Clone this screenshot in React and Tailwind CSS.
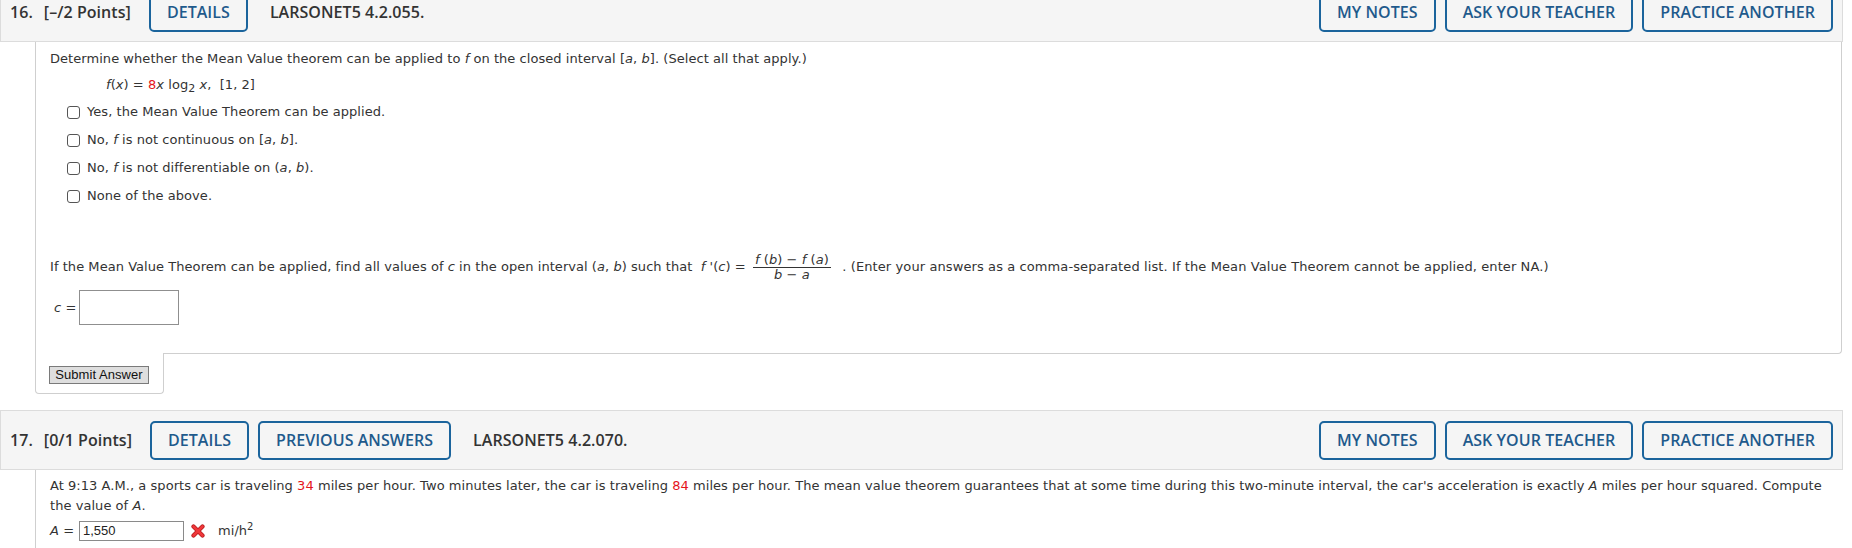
import React from 'react';

const btn =
  "h-[39px] px-4 flex items-center border-2 border-[#1b649c] rounded-[5px] text-[#1f5a8c] text-[16px] font-semibold whitespace-nowrap bg-[#f5f5f5]";

const QHeader = ({ num, points, left, code }) => (
  <div className="flex items-center h-[60px] w-[1843px] border border-[#dcdcdc] bg-[#f5f5f5] pl-[9px] pr-[9px] font-['Open_Sans',sans-serif] text-[#333]">
    <span className="text-[16px] font-semibold">{num}</span>
    <span className="ml-[11px] text-[16px] font-semibold">{points}</span>
    <div className="ml-[18px] flex gap-[9px]">
      {left.map((l) => (
        <div key={l} className={btn}>{l}</div>
      ))}
    </div>
    <span className="ml-[22px] text-[16px] font-semibold">{code}</span>
    {/* right side actions */}
    <div className="ml-auto flex gap-[9px]">
      <div className={btn}>MY NOTES</div>
      <div className={btn}>ASK YOUR TEACHER</div>
      <div className={btn}>PRACTICE ANOTHER</div>
    </div>
  </div>
);

const Box = () => (
  <span className="inline-block w-[13px] h-[13px] border border-[#555] rounded-[3px] bg-white mr-[7px]" />
);

const Option = ({ children }) => (
  <div className="flex items-center h-[20px] pl-[17px]">
    <Box />
    <span>{children}</span>
  </div>
);

const WrongIcon = () => (
  <svg width="14" height="14" viewBox="0 0 14 14" className="mx-[7px]">
    <path d="M2.5 2.5 L11.5 11.5 M11.5 2.5 L2.5 11.5" stroke="#b51a1a" strokeWidth="4.2" strokeLinecap="round" />
    <path d="M2.5 2.5 L11.5 11.5 M11.5 2.5 L2.5 11.5" stroke="#f0373a" strokeWidth="2.6" strokeLinecap="round" />
  </svg>
);

export default function App() {
  return (
    <div className="w-[1852px] h-[548px] overflow-hidden bg-white">
      <div className="mt-[-18px] font-['DejaVu_Sans',Verdana,sans-serif] text-[13px] tracking-[0.05px] text-[#333]">
        {/* Question 16 */}
        <QHeader num="16." points="[–/2 Points]" left={["DETAILS"]} code="LARSONET5 4.2.055." />
        <div className="ml-[35px] w-[1807px] border-l border-r border-b border-[#cfcfcf] rounded-br-[4px] pl-[14px] pt-[7px] pb-[28px]">
          <div className="h-[20px] leading-[20px] whitespace-nowrap">
            Determine whether the Mean Value theorem can be applied to <i>f</i> on the closed interval [<i>a</i>, <i>b</i>]. (Select all that apply.)
          </div>
          <div className="mt-[6px] h-[20px] leading-[20px] pl-[56px] whitespace-pre">
            <i>f</i>(<i>x</i>) = <span className="text-[#e5141b]">8</span><i>x</i> log<sub className="text-[11px]">2</sub> <i>x</i>,  [1, 2]
          </div>
          <div className="mt-[7px] flex flex-col gap-2">
            <Option>Yes, the Mean Value Theorem can be applied.</Option>
            <Option>No, <i>f</i> is not continuous on [<i>a</i>, <i>b</i>].</Option>
            <Option>No, <i>f</i> is not differentiable on (<i>a</i>, <i>b</i>).</Option>
            <Option>None of the above.</Option>
          </div>
          <div className="mt-[46px] h-[30px] flex items-center whitespace-pre">
            <span>If the Mean Value Theorem can be applied, find all values of <i>c</i> in the open interval (<i>a</i>, <i>b</i>) such that  <i>f</i> '(<i>c</i>) = </span>
            <span className="inline-flex flex-col items-center mx-[3px]">
              <span className="leading-[13px] border-b border-[#333] px-[2px] pb-px"><i>f</i> (<i>b</i>) − <i>f</i> (<i>a</i>)</span>
              <span className="leading-[13px]"><i>b</i> − <i>a</i></span>
            </span>
            <span className="tracking-[0.1px]">  . (Enter your answers as a comma-separated list. If the Mean Value Theorem cannot be applied, enter NA.)</span>
          </div>
          <div className="mt-[8px] flex items-center pl-[4px]">
            <span className="w-[25px]"><i>c</i> =</span>
            <div className="w-[100px] h-[35px] border border-[#8f8f8f] bg-white" />
          </div>
        </div>
        <div className="-mt-px ml-[35px] w-[129px] h-[41px] border-l border-r border-b border-[#cfcfcf] rounded-b-[4px] bg-white pl-[13px] pt-[12px]">
          <button className="h-[18px] w-[100px] bg-[#dedede] border border-[#7a7a7a] font-['Liberation_Sans',Arial,sans-serif] text-[13px] leading-[15px] text-[#111]">
            Submit Answer
          </button>
        </div>

        {/* Question 17 */}
        <div className="mt-[16px]">
          <QHeader num="17." points="[0/1 Points]" left={["DETAILS", "PREVIOUS ANSWERS"]} code="LARSONET5 4.2.070." />
        </div>
        <div className="ml-[35px] w-[1807px] border-l border-[#cfcfcf] pl-[14px] pt-[6px] pb-6">
          <div className="leading-[20px] whitespace-nowrap">
            At 9:13 A.M., a sports car is traveling <span className="text-[#e5141b]">34</span> miles per hour. Two minutes later, the car is traveling <span className="text-[#e5141b]">84</span> miles per hour. The mean value theorem guarantees that at some time during this two-minute interval, the car's acceleration is exactly <i>A</i> miles per hour squared. Compute
            <br />
            the value of <i>A</i>.
          </div>
          <div className="mt-[5px] h-[20px] flex items-center">
            <span className="w-[29px]"><i>A</i> =</span>
            <div className="w-[105px] h-[20px] border border-[#8a8a8a] bg-white pl-[3px] font-['Liberation_Sans',Arial,sans-serif] text-[13px] leading-[18px] tracking-normal text-[#222]">
              1,550
            </div>
            <WrongIcon />
            <span className="ml-[6px]">mi/h<sup className="text-[10px]">2</sup></span>
          </div>
        </div>
      </div>
    </div>
  );
}
